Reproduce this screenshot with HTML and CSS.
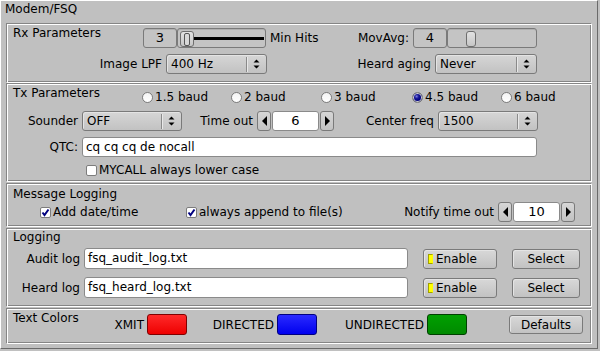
FILE: index.html
```html
<!DOCTYPE html>
<html>
<head>
    <title>Modem/FSQ</title>
    <link rel="stylesheet" href="styles.css">
</head>
<body>
    <div class="tab">
        <div class="tab-title">Modem/FSQ</div>

        <div class="group rx">
            <div class="row">
                <span class="glabel rx-title">Rx Parameters</span>
                <span class="valbox">3</span>
                <span class="slider slider-hits"><span class="groove"></span><span class="knob knob-nice"></span></span>
                <span class="lbl minhits">Min Hits</span>
                <span class="lbl rlbl movavg-lbl">MovAvg:</span>
                <span class="valbox">4</span>
                <span class="slider slider-avg"><span class="knob knob-avg"></span></span>
            </div>
            <div class="row row-gap6">
                <span class="lbl rlbl lpf-lbl">Image LPF</span>
                <span class="choice lpf"><span class="choice-text">400 Hz</span><span class="arrows"><svg width="7" height="10" viewBox="0 0 7 10"><path d="M3.5 0.5 L6.5 3.5 L0.5 3.5 Z M0.5 6.5 L6.5 6.5 L3.5 9.5 Z" fill="#000"/></svg></span></span>
                <span class="lbl rlbl aging-lbl">Heard aging</span>
                <span class="choice aging"><span class="choice-text">Never</span><span class="arrows"><svg width="7" height="10" viewBox="0 0 7 10"><path d="M3.5 0.5 L6.5 3.5 L0.5 3.5 Z M0.5 6.5 L6.5 6.5 L3.5 9.5 Z" fill="#000"/></svg></span></span>
            </div>
        </div>

        <div class="group tx">
            <div class="row row-radio">
                <span class="glabel tx-title">Tx Parameters</span>
                <label class="radio r1"><span class="dot"></span>1.5 baud</label>
                <label class="radio r2"><span class="dot"></span>2 baud</label>
                <label class="radio r3"><span class="dot"></span>3 baud</label>
                <label class="radio r4"><span class="dot on"></span>4.5 baud</label>
                <label class="radio r5"><span class="dot"></span>6 baud</label>
            </div>
            <div class="row row-gap5">
                <span class="lbl rlbl tx-lbl">Sounder</span>
                <span class="choice sounder"><span class="choice-text">OFF</span><span class="arrows"><svg width="7" height="10" viewBox="0 0 7 10"><path d="M3.5 0.5 L6.5 3.5 L0.5 3.5 Z M0.5 6.5 L6.5 6.5 L3.5 9.5 Z" fill="#000"/></svg></span></span>
                <span class="lbl rlbl timeout-lbl">Time out</span>
                <span class="counter">
                    <span class="cbtn"><span class="tri-left"></span></span>
                    <span class="cval">6</span>
                    <span class="cbtn"><span class="tri-right"></span></span>
                </span>
                <span class="lbl rlbl center-lbl">Center freq</span>
                <span class="choice center"><span class="choice-text">1500</span><span class="arrows"><svg width="7" height="10" viewBox="0 0 7 10"><path d="M3.5 0.5 L6.5 3.5 L0.5 3.5 Z M0.5 6.5 L6.5 6.5 L3.5 9.5 Z" fill="#000"/></svg></span></span>
            </div>
            <div class="row row-gap6">
                <span class="lbl rlbl tx-lbl">QTC:</span>
                <span class="input qtc">cq cq cq de nocall</span>
            </div>
            <div class="row row-gap3">
                <label class="check mycall"><span class="box"></span>MYCALL always lower case</label>
            </div>
        </div>

        <div class="group msg">
            <div class="glabel-line">Message Logging</div>
            <div class="row row-gap1">
                <label class="check datetime"><span class="box"><svg width="9" height="9" viewBox="0 0 9 9"><path d="M1.5 4.5 L3.5 7 L7.5 1.5" stroke="#000080" stroke-width="2" fill="none"/></svg></span>Add date/time</label>
                <label class="check append"><span class="box"><svg width="9" height="9" viewBox="0 0 9 9"><path d="M1.5 4.5 L3.5 7 L7.5 1.5" stroke="#000080" stroke-width="2" fill="none"/></svg></span>always append to file(s)</label>
                <span class="lbl rlbl notify-lbl">Notify time out</span>
                <span class="counter">
                    <span class="cbtn"><span class="tri-left"></span></span>
                    <span class="cval">10</span>
                    <span class="cbtn"><span class="tri-right"></span></span>
                </span>
            </div>
        </div>

        <div class="group logging">
            <div class="glabel-line">Logging</div>
            <div class="row row-log row-gap4">
                <span class="lbl rlbl log-lbl">Audit log</span>
                <span class="input logfile">fsq_audit_log.txt</span>
                <span class="button enable"><span class="light"></span>Enable</span>
                <span class="button select">Select</span>
            </div>
            <div class="row row-log row-gap8">
                <span class="lbl rlbl log-lbl">Heard log</span>
                <span class="input logfile">fsq_heard_log.txt</span>
                <span class="button enable"><span class="light"></span>Enable</span>
                <span class="button select">Select</span>
            </div>
        </div>

        <div class="group colors">
            <div class="row row-colors">
                <span class="glabel colors-title">Text Colors</span>
                <span class="lbl rlbl xmit-lbl">XMIT</span>
                <span class="swatch red"></span>
                <span class="lbl rlbl dir-lbl">DIRECTED</span>
                <span class="swatch blue"></span>
                <span class="lbl rlbl undir-lbl">UNDIRECTED</span>
                <span class="swatch green"></span>
                <span class="button defaults">Defaults</span>
            </div>
        </div>
    </div>
</body>
</html>
```

FILE: styles.css
```css
body {
    margin: 0;
    background: #c0c0c0;
    font-family: "DejaVu Sans", sans-serif;
    font-size: 12px;
    color: #000;
}
.tab {
    width: 598px;
    height: 349px;
    box-sizing: border-box;
    border: 1px solid;
    border-color: #fff #6a6a6a #6a6a6a #fff;
    padding-top: 1px;
}
.tab-title {
    line-height: 14px;
    padding-left: 4px;
}
.group {
    box-sizing: border-box;
    width: 586px;
    margin-left: 5px;
    margin-top: 1px;
    border: 1px solid;
    border-color: #858585 #fff #fff #858585;
    box-shadow: inset 1px 1px #fff, inset -1px -1px #858585;
}
.rx {
    margin-top: 7px;
    height: 60px;
    padding-top: 4px;
}
.tx {
    margin-top: 0;
    height: 99px;
    padding-top: 4px;
}
.msg {
    height: 44px;
    padding-top: 3px;
}
.logging {
    height: 79px;
    padding-top: 1px;
}
.colors {
    height: 36px;
    padding-top: 5px;
}
.row {
    display: flex;
    align-items: center;
    height: 20px;
}
.row-gap1 { margin-top: 1px; }
.row-gap3 { margin-top: 3px; }
.row-gap4 { margin-top: 4px; }
.row-gap5 { margin-top: 5px; }
.row-gap6 { margin-top: 6px; }
.row-gap8 { margin-top: 8px; }
.row-radio { height: 18px; }
.row-log { height: 21px; }
.row-colors { height: 21px; }

.glabel {
    box-sizing: border-box;
    align-self: flex-start;
    line-height: 14px;
    padding-left: 6px;
    margin-top: -2px;
    flex: none;
}
.glabel-line {
    line-height: 14px;
    padding-left: 6px;
}
.rx-title { width: 136px; }
.tx-title { width: 135px; }
.colors-title { width: 100px; margin-top: -3px; }

.lbl {
    box-sizing: border-box;
    flex: none;
    white-space: nowrap;
}
.rlbl {
    text-align: right;
    padding-right: 4px;
}
.minhits { width: 60px; padding-left: 4px; }
.movavg-lbl { width: 87px; }
.lpf-lbl { width: 159px; }
.aging-lbl { width: 168px; }
.tx-lbl { width: 75px; }
.timeout-lbl { width: 75px; }
.center-lbl { width: 104px; }
.notify-lbl { width: 112px; }
.log-lbl { width: 77px; }
.xmit-lbl { width: 40px; padding-right: 3px; }
.dir-lbl { width: 90px; padding-right: 3px; }
.undir-lbl { width: 110px; padding-right: 3px; }

/* value outputs and sliders */
.valbox {
    box-sizing: border-box;
    width: 34px;
    height: 20px;
    border: 1px solid #7a7a7a;
    border-radius: 3px;
    background: #c4c4c4;
    box-shadow: inset 0 1px #b0b0b0;
    text-align: center;
    line-height: 18px;
    font-size: 13px;
}
.slider {
    position: relative;
    box-sizing: border-box;
    height: 20px;
    border: 1px solid #7a7a7a;
    border-radius: 3px;
    background: #c4c4c4;
    box-shadow: inset 0 1px #b0b0b0;
}
.slider-hits { width: 89px; }
.slider-avg { width: 90px; }
.groove {
    position: absolute;
    left: 2px;
    right: 1px;
    top: 8px;
    height: 3px;
    background: #000;
}
.knob {
    position: absolute;
    top: 2px;
    box-sizing: border-box;
    height: 16px;
    border: 1px solid #6e6e6e;
    border-radius: 3px;
    background: linear-gradient(#e2e2e2, #c6c6c6);
}
.knob-nice {
    left: 2px;
    width: 14px;
}
.knob-nice::after {
    content: "";
    position: absolute;
    left: 3px;
    top: 1px;
    width: 4px;
    height: 11px;
    border: 1px solid #555;
    border-radius: 2px;
    background: #d8d8d8;
}
.knob-avg {
    left: 18px;
    width: 10px;
}

/* choices */
.choice {
    box-sizing: border-box;
    display: flex;
    align-items: center;
    height: 20px;
    border: 1px solid #7a7a7a;
    border-radius: 3px;
    background: linear-gradient(#d6d6d6, #c2c2c2);
    box-shadow: inset 1px 1px #e4e4e4;
    flex: none;
}
.choice-text {
    flex: 1;
    padding-left: 4px;
}
.arrows {
    width: 19px;
    height: 15px;
    border-left: 1px solid #8a8a8a;
    box-shadow: inset 1px 0 #e8e8e8;
    display: flex;
    align-items: center;
    justify-content: center;
}
.arrows svg { display: block; }
.lpf { width: 101px; }
.aging { width: 102px; }
.sounder { width: 100px; }
.center { width: 100px; }

/* radio and check buttons */
.radio {
    display: flex;
    align-items: center;
    flex: none;
    white-space: nowrap;
}
.r1 { width: 89px; }
.r2 { width: 90px; }
.r3 { width: 91px; }
.r4 { width: 89px; }
.r5 { width: 80px; }
.dot {
    box-sizing: border-box;
    width: 11px;
    height: 11px;
    border: 1px solid #7c7c7c;
    border-radius: 50%;
    background: linear-gradient(#f4f4f4, #ffffff);
    margin-right: 2px;
}
.dot.on {
    background: radial-gradient(circle at 40% 38%, #8080e0 0, #1a1a9a 2px, #000080 4px);
    box-shadow: inset 0 0 0 1px #d0d0d0;
}
.check {
    display: flex;
    align-items: center;
    flex: none;
    white-space: nowrap;
}
.box {
    box-sizing: border-box;
    width: 11px;
    height: 11px;
    border: 1px solid #7c7c7c;
    border-radius: 2px;
    background: #fff;
    margin-right: 2px;
    display: flex;
    align-items: center;
    justify-content: center;
}
.box svg { display: block; }
.mycall { margin-left: 79px; }
.datetime { margin-left: 33px; width: 146px; }
.append { width: 200px; }

/* counters */
.counter {
    display: flex;
    height: 20px;
    flex: none;
}
.cbtn {
    box-sizing: border-box;
    width: 14px;
    height: 20px;
    border: 1px solid #7a7a7a;
    border-radius: 3px;
    background: linear-gradient(#d6d6d6, #c2c2c2);
    display: flex;
    align-items: center;
    justify-content: center;
}
.tri-left {
    width: 0;
    height: 0;
    border-top: 5px solid transparent;
    border-bottom: 5px solid transparent;
    border-right: 5px solid #000;
}
.tri-right {
    width: 0;
    height: 0;
    border-top: 5px solid transparent;
    border-bottom: 5px solid transparent;
    border-left: 5px solid #000;
}
.cval {
    box-sizing: border-box;
    width: 47px;
    margin: 0 1px;
    border: 1px solid #8a8a8a;
    border-radius: 3px;
    background: #fff;
    text-align: center;
    line-height: 18px;
    font-size: 13px;
}

/* inputs */
.input {
    box-sizing: border-box;
    height: 20px;
    border: 1px solid #8a8a8a;
    border-radius: 3px;
    background: #fff;
    padding-left: 3px;
    line-height: 18px;
    flex: none;
}
.qtc { width: 455px; }
.logfile { width: 324px; height: 21px; line-height: 19px; }

/* buttons */
.button {
    box-sizing: border-box;
    height: 20px;
    border: 1px solid #7a7a7a;
    border-radius: 3px;
    background: linear-gradient(#d8d8d8, #c2c2c2);
    box-shadow: inset 1px 1px #e4e4e4;
    display: flex;
    align-items: center;
    justify-content: center;
    flex: none;
}
.enable {
    width: 74px;
    margin-left: 15px;
    justify-content: flex-start;
    padding-left: 4px;
}
.light {
    box-sizing: border-box;
    width: 5px;
    height: 10px;
    background: #ffff00;
    border: 1px solid #a0a000;
    border-right-color: #ffff00;
    margin-right: 3px;
}
.select {
    width: 68px;
    margin-left: 15px;
}
.swatch {
    box-sizing: border-box;
    width: 40px;
    height: 21px;
    border: 1px solid #333;
    border-radius: 3px;
    flex: none;
}
.red { background: linear-gradient(#ff2a2a, #ee0000); border-color: #800000; }
.blue { background: linear-gradient(#2a2aff, #0000ee); border-color: #000080; }
.green { background: linear-gradient(#00a000, #008a00); border-color: #004000; }
.defaults {
    width: 74px;
    height: 19px;
    margin-left: 42px;
}
```
